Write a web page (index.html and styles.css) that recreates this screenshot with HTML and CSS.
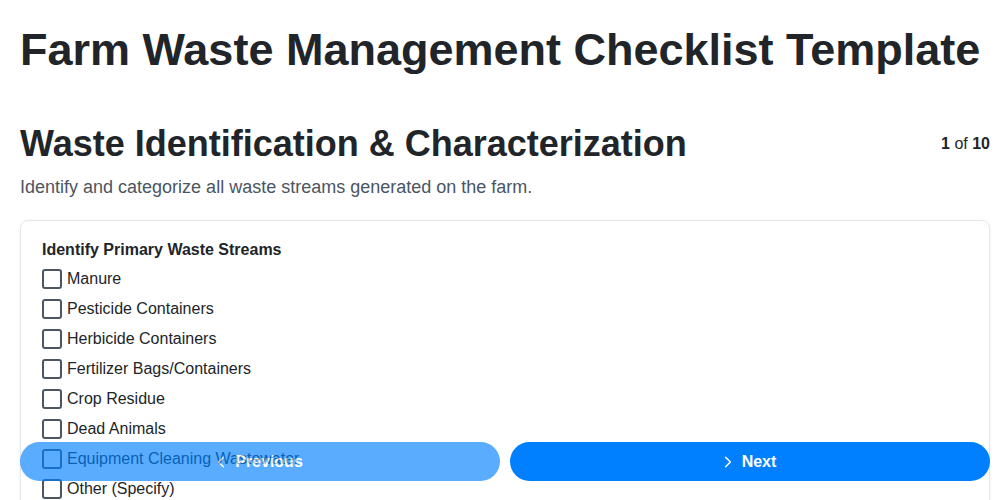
FILE: index.html
```html
<!DOCTYPE html>
<html>
<head>
<meta charset="utf-8">
<link rel="stylesheet" href="styles.css">
</head>
<body>
<div class="page">
  <h1 class="title">Farm Waste Management Checklist Template</h1>
  <div class="section-head">
    <h2 class="section-title">Waste Identification &amp; Characterization</h2>
    <div class="counter"><b>1</b> of <b>10</b></div>
  </div>
  <p class="desc">Identify and categorize all waste streams generated on the farm.</p>
  <div class="card">
    <div class="label">Identify Primary Waste Streams</div>
    <label class="opt"><span class="box"></span>Manure</label>
    <label class="opt"><span class="box"></span>Pesticide Containers</label>
    <label class="opt"><span class="box"></span>Herbicide Containers</label>
    <label class="opt"><span class="box"></span>Fertilizer Bags/Containers</label>
    <label class="opt"><span class="box"></span>Crop Residue</label>
    <label class="opt"><span class="box"></span>Dead Animals</label>
    <label class="opt"><span class="box"></span>Equipment Cleaning Wastewater</label>
    <label class="opt"><span class="box"></span>Other (Specify)</label>
  </div>
</div>
<div class="nav">
  <button class="btn btn-prev"><svg class="chev" viewBox="0 0 10 16" width="8" height="14"><path d="M8 2 L2 8 L8 14" fill="none" stroke="#fff" stroke-width="1.8" stroke-linecap="round" stroke-linejoin="round"/></svg>Previous</button>
  <button class="btn btn-next"><svg class="chev" viewBox="0 0 10 16" width="8" height="14"><path d="M2 2 L8 8 L2 14" fill="none" stroke="#fff" stroke-width="1.8" stroke-linecap="round" stroke-linejoin="round"/></svg>Next</button>
</div>
</body>
</html>
```

FILE: styles.css
```css
* { box-sizing: border-box; }
html, body { margin: 0; padding: 0; background: #fff; }
body {
  font-family: "Liberation Sans", Arial, sans-serif;
  color: #212529;
}
.page {
  padding: 0 10px 0 20px;
}
.title {
  font-size: 45px;
  font-weight: bold;
  margin: 0;
  padding-top: 24px;
  line-height: 52px;
  color: #212529;
}
.section-head {
  display: flex;
  justify-content: space-between;
  align-items: flex-start;
  margin-top: 46px;
}
.section-title {
  font-size: 36px;
  font-weight: bold;
  margin: 0;
  line-height: 44px;
}
.counter {
  font-size: 16px;
  line-height: 20px;
  margin-top: 12px;
  color: #212529;
}
.desc {
  font-size: 18px;
  color: #4b5563;
  margin: 9px 0 0;
  line-height: 24px;
}
.card {
  margin-top: 21px;
  border: 1px solid #e5e7eb;
  border-radius: 8px;
  box-shadow: 0 1px 4px rgba(0,0,0,0.06);
  padding: 20px 21px;
  min-height: 300px;
}
.label {
  font-size: 16px;
  font-weight: bold;
  line-height: 18px;
  margin-bottom: 5px;
}
.opt {
  display: flex;
  align-items: center;
  font-size: 16px;
  line-height: 20px;
  height: 30px;
  color: #212529;
}
.box {
  width: 20px;
  height: 20px;
  border: 2px solid #4b5563;
  border-radius: 3px;
  margin-right: 5px;
  flex: none;
}
.nav {
  position: fixed;
  left: 20px;
  right: 10px;
  bottom: 19px;
  display: flex;
  gap: 10px;
}
.btn {
  flex: 1;
  height: 39px;
  border: none;
  border-radius: 20px;
  background: #0080ff;
  color: #fff;
  font-family: "Liberation Sans", Arial, sans-serif;
  font-size: 16px;
  font-weight: bold;
  display: flex;
  align-items: center;
  justify-content: center;
  gap: 10px;
}
.btn-prev { opacity: 0.65; }
```
